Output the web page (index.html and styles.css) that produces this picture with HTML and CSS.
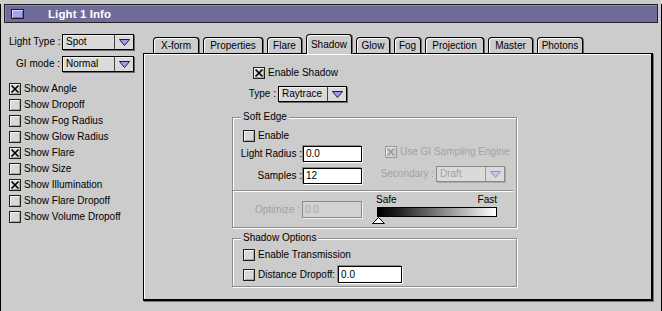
FILE: index.html
```html
<!DOCTYPE html>
<html>
<head>
<meta charset="utf-8">
<link rel="stylesheet" href="styles.css">
</head>
<body>
<div class="window">
  <div class="titlebar"><span class="closebox"></span><span class="title">Light 1 Info</span></div>
  <div class="body">
    <div class="side">
      <div class="fields">
        <div class="field"><span class="lbl">Light Type :</span>
          <div class="popup side-pop"><span class="ptext">Spot</span><span class="parrow"><svg width="11" height="7" viewBox="0 0 11 7"><polygon points="0.5,0.5 10.5,0.5 5.5,6.5" fill="#9c9cf0" stroke="#222" stroke-width="1"/></svg></span></div>
        </div>
        <div class="field"><span class="lbl">GI mode :</span>
          <div class="popup side-pop"><span class="ptext">Normal</span><span class="parrow"><svg width="11" height="7" viewBox="0 0 11 7"><polygon points="0.5,0.5 10.5,0.5 5.5,6.5" fill="#9c9cf0" stroke="#222" stroke-width="1"/></svg></span></div>
        </div>
      </div>
      <ul class="checks">
        <li><span class="cb"><svg viewBox="0 0 10 10"><path d="M1.5 1.5l7 7M8.5 1.5l-7 7" stroke="#000" stroke-width="1.6"/></svg></span>Show Angle</li>
        <li><span class="cb"></span>Show Dropoff</li>
        <li><span class="cb"></span>Show Fog Radius</li>
        <li><span class="cb"></span>Show Glow Radius</li>
        <li><span class="cb"><svg viewBox="0 0 10 10"><path d="M1.5 1.5l7 7M8.5 1.5l-7 7" stroke="#000" stroke-width="1.6"/></svg></span>Show Flare</li>
        <li><span class="cb"></span>Show Size</li>
        <li><span class="cb"><svg viewBox="0 0 10 10"><path d="M1.5 1.5l7 7M8.5 1.5l-7 7" stroke="#000" stroke-width="1.6"/></svg></span>Show Illumination</li>
        <li><span class="cb"></span>Show Flare Dropoff</li>
        <li><span class="cb"></span>Show Volume Dropoff</li>
      </ul>
    </div>
    <div class="tabarea">
      <div class="tabs">
        <span class="tab t1">X-form</span>
        <span class="tab t2">Properties</span>
        <span class="tab t3">Flare</span>
        <span class="tab t4 active">Shadow</span>
        <span class="tab t5">Glow</span>
        <span class="tab t6">Fog</span>
        <span class="tab t7">Projection</span>
        <span class="tab t8">Master</span>
        <span class="tab t9">Photons</span>
      </div>
      <div class="panel">
        <div class="row enable-shadow"><span class="cb"><svg viewBox="0 0 10 10"><path d="M1.5 1.5l7 7M8.5 1.5l-7 7" stroke="#000" stroke-width="1.6"/></svg></span>Enable Shadow</div>
        <div class="row type-row"><span class="type-lbl">Type :</span>
          <div class="popup type-pop"><span class="ptext">Raytrace</span><span class="parrow"><svg width="11" height="7" viewBox="0 0 11 7"><polygon points="0.5,0.5 10.5,0.5 5.5,6.5" fill="#9c9cf0" stroke="#222" stroke-width="1"/></svg></span></div>
        </div>
        <fieldset class="group soft">
          <legend>Soft Edge</legend>
          <div class="soft-grid">
            <div class="col-left">
              <div class="row enable-row"><span class="cb"></span>Enable</div>
              <div class="row lr-row"><span class="flbl">Light Radius :</span><span class="input">0.0</span></div>
              <div class="row samp-row"><span class="flbl">Samples :</span><span class="input">12</span></div>
            </div>
            <div class="col-right">
              <div class="row gi-row disabled"><span class="cb dis"><svg viewBox="0 0 10 10"><path d="M1.5 1.5l7 7M8.5 1.5l-7 7" stroke="#999" stroke-width="1.6"/></svg></span>Use GI Sampling Engine</div>
              <div class="row sec-row disabled"><span class="sec-lbl">Secondary :</span>
                <div class="popup sec-pop dis"><span class="ptext">Draft</span><span class="parrow"><svg width="11" height="7" viewBox="0 0 11 7"><polygon points="0.5,0.5 10.5,0.5 5.5,6.5" fill="#c4c4ee" stroke="#999" stroke-width="1"/></svg></span></div>
              </div>
            </div>
          </div>
          <div class="sep"></div>
          <div class="opt-row">
            <div class="opt-field disabled"><span class="olbl">Optimize :</span><span class="input dis">0.0</span></div>
            <div class="slider">
              <div class="slabels"><span>Safe</span><span>Fast</span></div>
              <div class="sbar"></div>
              <svg class="thumb" width="13" height="7" viewBox="0 0 13 7"><polygon points="6.5,0.5 12.5,6.5 0.5,6.5" fill="#fff" stroke="#000" stroke-width="1"/></svg>
            </div>
          </div>
        </fieldset>
        <fieldset class="group shopts">
          <legend>Shadow Options</legend>
          <div class="row trans-row"><span class="cb"></span>Enable Transmission</div>
          <div class="row dist-row"><span class="cb"></span><span class="dlbl">Distance Dropoff:</span><span class="input dist-in">0.0</span></div>
        </fieldset>
      </div>
    </div>
  </div>
</div>
</body>
</html>
```

FILE: styles.css
```css
* { box-sizing: border-box; }
html, body { margin: 0; padding: 0; background: #cccccc; }
body {
  font-family: "Liberation Sans", Arial, sans-serif;
  font-size: 10px;
  line-height: 12px;
  color: #000;
}
.window {
  width: 662px;
  height: 310px;
  border: 1px solid #000;
  border-top: none;
  background: #cccccc;
}
.titlebar {
  margin: 4px 3px 0 3px;
  height: 19px;
  background: #6f6b9b;
  border: 1px solid #222;
  box-shadow: inset 1px 1px 0 #8b87b3;
  display: flex;
  align-items: center;
}
.closebox {
  width: 13px;
  height: 10px;
  margin-left: 6px;
  border: 1px solid #1a1a2a;
  background: #a3a3ea;
  box-shadow: inset 1px 1px 0 #d8d8ff, inset -1px -1px 0 #7070b8;
}
.title {
  margin-left: 24px;
  color: #fff;
  font-weight: bold;
  font-size: 11.5px;
  letter-spacing: 0.1px;
}
.body {
  display: flex;
  padding: 11px 0 0 8px;
}
.side { width: 134px; }
.fields { display: flex; flex-direction: column; gap: 6px; }
.field { display: flex; align-items: center; height: 16px; }
.lbl { width: 51px; text-align: right; margin-right: 2px; white-space: nowrap; }

.popup {
  display: flex;
  height: 16px;
  border: 1px solid #000;
  background: #dadada;
  box-shadow: 1px 1px 0 #6a6a6a, inset 1px 1px 0 #f0f0f0;
}
.popup .ptext { flex: 1; padding-left: 3px; line-height: 14px; white-space: nowrap; }
.popup .parrow {
  width: 19px;
  border-left: 1px solid #444;
  display: flex;
  align-items: center;
  justify-content: center;
}
.popup.dis { border-color: #8a8a8a; box-shadow: 1px 1px 0 #aaa; color: #a2a2a2; }
.popup.dis .parrow { border-left-color: #999; }
.side-pop { width: 72px; }
.type-pop { width: 69px; }
.sec-pop { width: 69px; }

.checks { list-style: none; margin: 9px 0 0 0; padding: 0; }
.checks li { display: flex; align-items: center; height: 16px; white-space: nowrap; }
.cb {
  width: 12px;
  height: 12px;
  flex: none;
  border: 1px solid #1e1e1e;
  background: #d8d8d8;
  box-shadow: inset 1px 1px 0 #f4f4f4, inset -1px -1px 0 #a6a6a6;
  margin-right: 3px;
  display: flex;
}
.cb svg { width: 10px; height: 10px; }
.cb.dis { border-color: #999; background: #d0d0d0; box-shadow: inset 1px 1px 0 #e8e8e8; }

.tabarea { width: 511px; }
.tabs {
  display: flex;
  align-items: flex-end;
  height: 20px;
  padding-left: 10px;
  gap: 4px;
  margin-bottom: -1px;
}
.tab {
  height: 16px;
  margin-bottom: 1px;
  border: 1px solid #000;
  border-bottom: none;
  border-radius: 4px 4px 0 0;
  background: #cccccc;
  box-shadow: inset 1px 1px 0 #fff, 1px 0 0 #6a6a6a;
  text-align: center;
  line-height: 15px;
  white-space: nowrap;
}
.tab.active {
  height: 20px;
  margin-bottom: 0;
  position: relative;
  z-index: 2;
  line-height: 19px;
}
.t1 { width: 46px; }
.t2 { width: 60px; }
.t3 { width: 35px; }
.t4 { width: 46px; }
.t5 { width: 34px; }
.t6 { width: 27px; }
.t7 { width: 59px; }
.t8 { width: 45px; }
.t9 { width: 46px; }

.panel {
  position: relative;
  z-index: 1;
  width: 510px;
  height: 248px;
  border: 1px solid #000;
  border-right-width: 2px;
  border-bottom-width: 2px;
  box-shadow: 1px 1px 0 #777, inset 1px 1px 0 #fff;
  background: #cccccc;
  padding-top: 11px;
}
.row { display: flex; align-items: center; height: 16px; white-space: nowrap; }
.enable-shadow { margin-left: 109px; }
.type-row { margin-left: 102px; margin-top: 5px; }
.type-lbl { width: 30px; text-align: right; margin-right: 2px; }

.group {
  margin: 0 0 0 88px;
  padding: 0;
  width: 285px;
  border: 1px solid #8c8c8c;
  box-shadow: 1px 1px 0 #fff, inset 1px 1px 0 #fff;
  min-width: 0;
}
.group legend {
  margin-left: 8px;
  padding: 0 2px;
  line-height: 12px;
  background: #cccccc;
}
.soft { margin-top: 9px; padding-top: 5px; padding-bottom: 3px; }
.soft-grid { display: grid; grid-template-columns: 130px 1fr; }
.enable-row { margin-left: 10px; }
.lr-row { margin-top: 2px; }
.samp-row { margin-top: 6px; }
.flbl { width: 69px; text-align: right; margin-right: 1px; }
.input {
  display: block;
  height: 16px;
  width: 59px;
  background: #fff;
  border: 1px solid #000;
  box-shadow: -1px -1px 0 #8a8a8a, 1px 1px 0 #fff;
  padding-left: 2px;
  line-height: 14px;
}
.input.dis {
  background: #d2d2d2;
  border-color: #8a8a8a;
  box-shadow: 1px 1px 0 #f0f0f0;
  color: #a6a6a6;
  width: 60px;
  height: 17px;
  line-height: 15px;
}
.disabled { color: #a2a2a2; }
.gi-row { margin-top: 16px; padding-left: 22px; }
.sec-row { margin-top: 6px; }
.sec-lbl { width: 71px; text-align: right; margin-right: 2px; }

.sep {
  margin: 6px 3px 0 0;
  height: 2px;
  border-top: 1px solid #8c8c8c;
  border-bottom: 1px solid #fff;
}
.opt-row { display: flex; align-items: flex-start; }
.opt-field { display: flex; align-items: center; margin-top: 9px; }
.olbl { width: 67px; text-align: right; margin-right: 2px; white-space: nowrap; }
.slider { margin-left: 10px; margin-top: 2px; width: 125px; display: flex; flex-direction: column; }
.slabels { display: flex; justify-content: space-between; padding-left: 4px; width: 125px; height: 12px; }
.sbar {
  margin-top: 1px;
  margin-left: 5px;
  width: 120px;
  height: 10px;
  border: 1px solid #000;
  background: linear-gradient(to right, #000 0%, #1a1a1a 15%, #888 55%, #fff 100%);
}
.thumb { display: block; }

.shopts { margin-top: 4px; padding-top: 3px; padding-bottom: 3px; }
.trans-row { margin-left: 10px; }
.dist-row { margin-left: 10px; margin-top: 3px; height: 17px; }
.dlbl { margin-right: 3px; }
.dist-in { width: 64px; height: 17px; line-height: 15px; }
```
